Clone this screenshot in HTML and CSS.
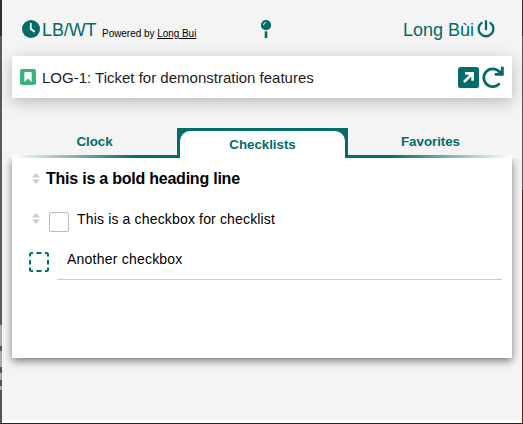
FILE: index.html
```
<!DOCTYPE html>
<html lang="en">
<head>
<meta charset="utf-8">
<title>LB/WT</title>
<link rel="stylesheet" href="styles.css">
</head>
<body>
<main class="popup">
  <header class="header">
    <div class="brand">
      <svg class="clock" width="18" height="18" viewBox="0 0 18 18"><circle cx="9" cy="9" r="9"/><path d="M8.8 3.8v5.3l3.3 2.3"/></svg>
      <span class="logo">LB/WT</span>
      <span class="powered">Powered by <a>Long Bui</a></span>
    </div>
    <svg class="pin" width="10" height="18" viewBox="0 0 10 18"><circle class="fill" cx="5" cy="5.2" r="5.1"/><path class="shine" d="M2.5 5.2Q2.5 2.8 5 2.5"/><path class="stem" d="M5 11.3v6.7"/></svg>
    <div class="user"><span>Long Bùi</span>
      <svg class="power" width="18" height="18" viewBox="0 0 18 18"><path d="M9 1.2v8M4.6 2.9A7.4 7.4 0 1 0 13.4 2.9"/></svg>
    </div>
  </header>
  <section class="ticket">
    <svg class="story" width="16" height="16" viewBox="0 0 16 16"><rect width="16" height="16" rx="2"/><path d="M4.3 3.8q0-.8.8-.8h5.8q.8 0 .8.8V13L8 9.5 4.3 13z"/></svg>
    <span class="title">LOG-1: Ticket for demonstration features</span>
    <svg class="open" width="21" height="21" viewBox="0 0 21 21"><rect width="21" height="21" rx="2.5"/><path d="M7.2 6.4h7.4v7.4M14.2 6.8L6 15"/></svg>
    <svg class="reload" width="22" height="22" viewBox="0 0 22 22"><path d="M16.8 18.2A8.9 8.9 0 1 1 17.6 6.2l1.4 1.6"/><path class="head" d="M20.4 .8v7.6h-7.6"/><path class="tip" d="M20 3v5h-5z"/></svg>
  </section>
  <nav class="tabs">
    <div class="tab left">Clock</div>
    <div class="tab active"><span>Checklists</span></div>
    <div class="tab right">Favorites</div>
  </nav>
  <section class="panel">
    <div class="row heading">
      <svg class="sort" width="8" height="11" viewBox="0 0 8 11"><path d="M0 4.5L4 0l4 4.5zM0 6.5h8L4 11z"/></svg>
      <span>This is a bold heading line</span>
    </div>
    <div class="row item">
      <svg class="sort" width="8" height="11" viewBox="0 0 8 11"><path d="M0 4.5L4 0l4 4.5zM0 6.5h8L4 11z"/></svg>
      <span class="check"></span>
      <span>This is a checkbox for checklist</span>
    </div>
    <div class="row draft">
      <svg class="dashed" width="20" height="20" viewBox="0 0 20 20"><path d="M1 4.5V2.5q0-1.5 1.5-1.5h1.5M16 1h1.5q1.5 0 1.5 1.5v2M19 15.5v2q0 1.5-1.5 1.5H16M4 19H2.500q-1.500 0-1.500-1.500v-2M7.500 1h5M7.500 19h5M1 8v4.500M19 8v4.500"/></svg>
      <div class="entry">Another checkbox</div>
    </div>
  </section>
</main>
</body>
</html>
```
FILE: styles.css
```
* { box-sizing: border-box; }
body {
  margin: 0;
  width: 523px;
  height: 424px;
  overflow: hidden;
  padding: 0 1px 1px 2px;
  background: linear-gradient(#303030 36px, #555b60 36px 325px, #aaa 325px 346px, #555 346px 351px, #aaa 351px 367px, #555 367px 373px, #aaa 373px 380px, #50565b 380px 386px, #aaa 386px 390px, #50565b 390px 423px, #2d2522 423px) left / 2px 100% no-repeat,
    linear-gradient(#303030 36px, #555 36px 190px, #3e2b24 190px) right / 1px 100% no-repeat, #2d2522;
  font-family: "Liberation Sans", Arial, sans-serif;
  color: #000;
}
svg { display: block; flex: none; }
.popup {
  height: 423px;
  padding: 0 10px;
  background: #f4f4f4;
  border-bottom: 3px solid #fff;
}
.header {
  display: grid;
  grid-template-columns: 249px 10px 1fr;
  align-items: center;
  height: 56px;
  padding: 2px 17px 0 0;
  color: #036b68;
  font-size: 18px;
}
.brand { display: flex; align-items: baseline; padding-left: 10px; }
.brand .clock { align-self: center; margin-right: 2px; }
.clock circle, .pin .fill { fill: #036b68; }
.clock path { fill: none; stroke: #f4f4f4; stroke-width: 1.9; stroke-linecap: round; }
.logo { width: 60px; letter-spacing: -.1px; }
.powered { position: relative; top: 2px; font-size: 10px; letter-spacing: -.04px; color: #000; white-space: nowrap; }
.powered a { text-decoration: underline; }
.user span { position: relative; top: 1px; }
.logo { position: relative; top: 1px; }
.pin path { fill: none; stroke: #036b68; stroke-width: 2.6; }
.pin .shine { stroke: #f4f4f4; stroke-width: 1; }
.user { display: flex; align-items: center; justify-content: flex-end; gap: 3px; }
.power path { fill: none; stroke: #036b68; stroke-width: 2.3; stroke-linecap: round; }
.ticket {
  display: flex;
  align-items: center;
  height: 42px;
  padding: 0 8px;
  background: #fff;
  box-shadow: 0 4px 16px rgba(0, 0, 0, .24);
}
.story rect { fill: #36b37e; }
.story path { fill: #fff; }
.title { flex: 1; margin-left: 6px; font-size: 15px; color: #222; }
.open rect { fill: #036b68; }
.open path { fill: none; stroke: #fff; stroke-width: 2.6; }
.reload { margin-left: 3px; }
.reload path { fill: none; stroke: #036b68; stroke-width: 2.8; stroke-linecap: round; }
.reload .head { stroke-linecap: butt; }
.reload .tip { fill: #036b68; stroke: none; }
.tabs {
  display: grid;
  grid-template-columns: 165px 171px 164px;
  height: 30px;
  margin-top: 30px;
  position: relative;
  color: #036b68;
  font-size: 13.333px;
  letter-spacing: -.03px;
  font-weight: bold;
  line-height: 28px;
  text-align: center;
}
.tab.left { background: linear-gradient(to right, #fff, #036b68 75%) bottom / 100% 3px no-repeat; }
.tab.right { padding-left: 1px; background: linear-gradient(to left, #fff, #036b68 75%) bottom / 100% 3px no-repeat; }
.tab.active { padding: 3px 3px 0; background: #036b68; }
.active span { display: block; height: 27px; background: #fff; border-radius: 10px 10px 0 0; }
.panel {
  height: 200px;
  padding: 10px 10px 0 17px;
  background: #fff;
  box-shadow: 0 3px 8px rgba(0, 0, 0, .5);
  clip-path: inset(0 -10px -20px -10px);
}
.row { display: flex; }
.sort { fill: #ccc; margin-left: 3px; }
.heading { height: 41px; align-items: flex-start; gap: 6px; font-size: 16px; font-weight: bold; line-height: 22px; letter-spacing: -.23px; }
.heading .sort { margin-top: 5px; }
.item { height: 41px; font-size: 14px; line-height: 20px; letter-spacing: .16px; }
.item .sort { margin-top: 4px; }
.check { width: 20px; height: 20px; margin: 3px 8px 0 9px; border: 1px solid #bbb; border-radius: 2px; }
.dashed { margin-top: 2px; fill: none; stroke: #036b68; stroke-width: 2; }
.entry { flex: 1; height: 30px; margin-left: 8px; padding-left: 10px; border-bottom: 1px solid #ccc; font-size: 14px; line-height: 18px; letter-spacing: .22px; }
```
